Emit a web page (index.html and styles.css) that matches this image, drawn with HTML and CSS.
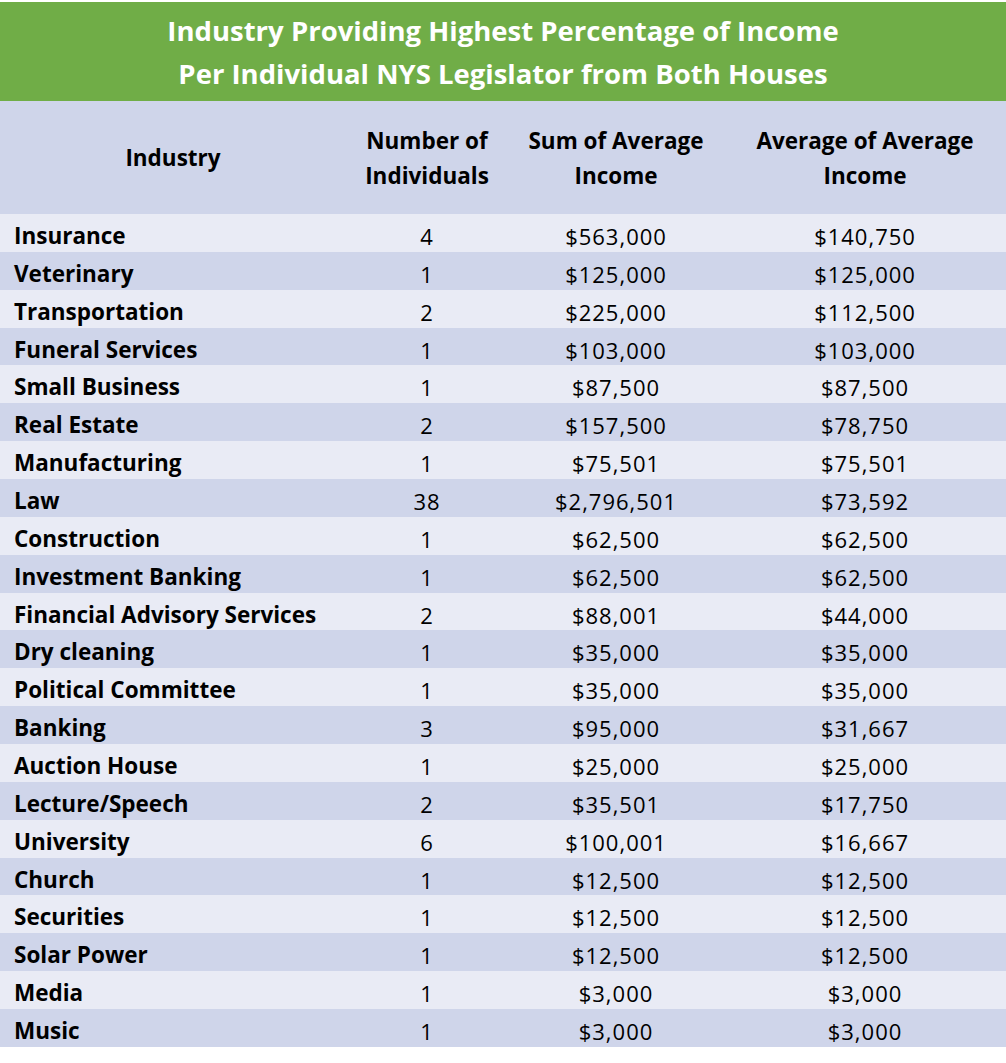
FILE: index.html
```html
<!DOCTYPE html>
<html>
<head>
<meta charset="utf-8">
<link rel="stylesheet" href="styles.css">
</head>
<body>
<div class="page">
  <div class="title">
    <div>Industry Providing Highest Percentage of Income</div>
    <div>Per Individual NYS Legislator from Both Houses</div>
  </div>
  <table class="data">
    <colgroup>
      <col class="c1"><col class="c2"><col class="c3"><col class="c4">
    </colgroup>
    <thead>
      <tr>
        <th>Industry</th>
        <th>Number of<br>Individuals</th>
        <th>Sum of Average<br>Income</th>
        <th>Average of Average<br>Income</th>
      </tr>
    </thead>
    <tbody>
      <tr><td>Insurance</td><td>4</td><td>$563,000</td><td>$140,750</td></tr>
      <tr><td>Veterinary</td><td>1</td><td>$125,000</td><td>$125,000</td></tr>
      <tr><td>Transportation</td><td>2</td><td>$225,000</td><td>$112,500</td></tr>
      <tr><td>Funeral Services</td><td>1</td><td>$103,000</td><td>$103,000</td></tr>
      <tr><td>Small Business</td><td>1</td><td>$87,500</td><td>$87,500</td></tr>
      <tr><td>Real Estate</td><td>2</td><td>$157,500</td><td>$78,750</td></tr>
      <tr><td>Manufacturing</td><td>1</td><td>$75,501</td><td>$75,501</td></tr>
      <tr><td>Law</td><td>38</td><td>$2,796,501</td><td>$73,592</td></tr>
      <tr><td>Construction</td><td>1</td><td>$62,500</td><td>$62,500</td></tr>
      <tr><td>Investment Banking</td><td>1</td><td>$62,500</td><td>$62,500</td></tr>
      <tr><td>Financial Advisory Services</td><td>2</td><td>$88,001</td><td>$44,000</td></tr>
      <tr><td>Dry cleaning</td><td>1</td><td>$35,000</td><td>$35,000</td></tr>
      <tr><td>Political Committee</td><td>1</td><td>$35,000</td><td>$35,000</td></tr>
      <tr><td>Banking</td><td>3</td><td>$95,000</td><td>$31,667</td></tr>
      <tr><td>Auction House</td><td>1</td><td>$25,000</td><td>$25,000</td></tr>
      <tr><td>Lecture/Speech</td><td>2</td><td>$35,501</td><td>$17,750</td></tr>
      <tr><td>University</td><td>6</td><td>$100,001</td><td>$16,667</td></tr>
      <tr><td>Church</td><td>1</td><td>$12,500</td><td>$12,500</td></tr>
      <tr><td>Securities</td><td>1</td><td>$12,500</td><td>$12,500</td></tr>
      <tr><td>Solar Power</td><td>1</td><td>$12,500</td><td>$12,500</td></tr>
      <tr><td>Media</td><td>1</td><td>$3,000</td><td>$3,000</td></tr>
      <tr><td>Music</td><td>1</td><td>$3,000</td><td>$3,000</td></tr>
    </tbody>
  </table>
</div>
</body>
</html>
```
FILE: styles.css
```css
html, body {
  margin: 0;
  padding: 0;
  background: #ffffff;
}
.page {
  padding-top: 2px;
  width: 1006px;
  font-family: "Open Sans", Lato, sans-serif;
  color: #000000;
}
.title {
  background: #70ad47;
  color: #ffffff;
  height: 99px;
  box-sizing: border-box;
  display: flex;
  flex-direction: column;
  justify-content: center;
  align-items: center;
  font-weight: 700;
  font-size: 27.5px;
  line-height: 43px;
  padding-top: 1px;
  padding-bottom: 1px;
}
.data {
  width: 1006px;
  border-collapse: collapse;
  table-layout: fixed;
}
.c1 { width: 346px; }
.c2 { width: 162px; }
.c3 { width: 216px; }
.c4 { width: 282px; }
.data th {
  background: #cfd5ea;
  height: 113px;
  padding: 0;
  font-weight: 700;
  font-size: 22.5px;
  line-height: 35px;
  text-align: center;
  vertical-align: middle;
}
.data td {
  height: 37.86px;
  padding: 0;
  font-size: 22px;
  letter-spacing: 1px;
  line-height: 24px;
  text-align: center;
  vertical-align: middle;
  padding-top: 6px;
  box-sizing: border-box;
}
.data td:first-child {
  text-align: left;
  padding-left: 14px;
  font-weight: 700;
  font-size: 22.5px;
  letter-spacing: 0;
}
.data tbody tr:nth-child(odd) td { background: #e9ebf5; }
.data tbody tr:nth-child(even) td { background: #cfd5ea; }
```
